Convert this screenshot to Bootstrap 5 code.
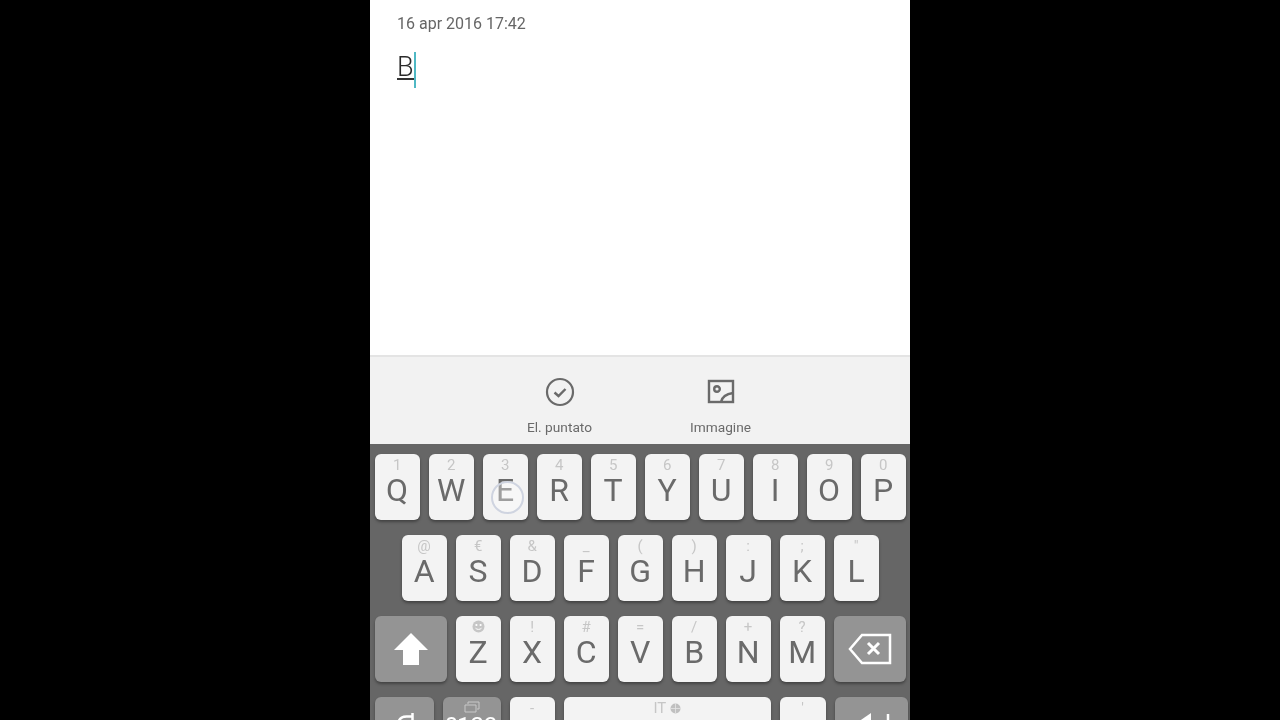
<!DOCTYPE html>
<html lang="it">
<head>
<meta charset="utf-8">
<title>Nota</title>
<link rel="stylesheet" href="https://cdn.jsdelivr.net/npm/bootstrap@5.3.0/dist/css/bootstrap.min.css">
<style>
html,body{height:720px;overflow:hidden;background:#000;}
body{font-family:Roboto,"Liberation Sans",sans-serif;}
.phone{width:540px;height:720px;background:#fff;overflow:hidden;filter:blur(.35px);}
.note{height:355px;padding:14px 27px 0;}
.stamp{font-size:16px;line-height:19px;color:#666;}
.typed{margin-top:19px;height:36px;font-size:27px;line-height:30px;color:#2a2a2a;font-weight:300;}
.typed span{display:inline-block;height:36px;border-right:2px solid #4fb8c4;position:relative;vertical-align:top;}
.typed span::after{content:"";position:absolute;left:0;right:0;top:26px;height:1.5px;background:#333;}
.tools{height:89px;background:#f2f2f2;border-top:2px solid #e4e4e4;color:#6a6a6a;}
.tool{width:161px;font-size:13.7px;line-height:16px;padding-top:20px;}
.tool svg{display:block;margin:0 auto 12px;}
.kbd{height:276px;background:#666;padding:10px 4px 0 4.6px;gap:15px;overflow:hidden;}
.krow{gap:9px;height:66px;flex:none;}
.krow.mid{padding-left:27px;}
.kk{width:45px;height:66px;flex:none;background:#f3f3f3;border-radius:6px;box-shadow:0 2px 3px rgba(0,0,0,.35);position:relative;color:#6a6a6a;text-align:center;font-size:32px;line-height:1;font-weight:400;padding-top:20px;}
.kk i{position:absolute;top:3px;left:0;right:0;font-style:normal;font-size:15px;line-height:16px;color:#c6c6c6;}
.kk.dark{background:#949494;color:#fff;padding-top:0;}
.wide{width:72px;}
.w59{width:59px;}
.w58{width:58px;}
.w207{width:207px;}
.w46{width:46px;}
.w73{width:73px;}
.ripple{position:absolute;left:8px;top:27px;width:33px;height:33px;border-radius:50%;border:2px solid #cfd4e0;background:rgba(255,255,255,.35);}
.kk.numkey{font-size:24px;padding-top:17px;color:#fff;}
.icotop{position:absolute;top:4px;left:0;right:0;margin:auto;display:block;}
.keyart{display:block;}
.mini{vertical-align:-1px;}
</style>
</head>
<body>
<div class="d-flex justify-content-center">
<div class="phone d-flex flex-column">
  <div class="note">
    <div class="stamp">16 apr 2016 17:42</div>
    <div class="typed"><span>B</span></div>
  </div>
  <div class="tools d-flex justify-content-center">
    <div class="tool text-center">
      <svg width="30" height="30" viewBox="0 0 30 30" fill="none" stroke="#6a6a6a" stroke-width="2.2"><circle cx="15" cy="15" r="13"/><path d="M9.5 15.5l4 3.5 7-7" stroke-width="2.4"/></svg>
      El. puntato
    </div>
    <div class="tool text-center">
      <svg width="30" height="30" viewBox="0 0 30 30" fill="none" stroke="#6a6a6a" stroke-width="2.4"><rect x="3" y="4" width="24" height="21"/><circle cx="11" cy="12" r="2.8"/><path d="M15 25c1-5 5-8 12-9"/></svg>
      Immagine
    </div>
  </div>
  <div class="kbd d-flex flex-column">
    <div class="krow d-flex">
      <div class="kk"><i>1</i>Q</div><div class="kk"><i>2</i>W</div>
      <div class="kk"><i>3</i>E<b class="ripple"></b></div>
      <div class="kk"><i>4</i>R</div><div class="kk"><i>5</i>T</div><div class="kk"><i>6</i>Y</div><div class="kk"><i>7</i>U</div><div class="kk"><i>8</i>I</div><div class="kk"><i>9</i>O</div><div class="kk"><i>0</i>P</div>
    </div>
    <div class="krow mid d-flex">
      <div class="kk"><i>@</i>A</div><div class="kk"><i>€</i>S</div><div class="kk"><i>&amp;</i>D</div><div class="kk"><i>_</i>F</div><div class="kk"><i>(</i>G</div><div class="kk"><i>)</i>H</div><div class="kk"><i>:</i>J</div><div class="kk"><i>;</i>K</div><div class="kk"><i>"</i>L</div>
    </div>
    <div class="krow d-flex">
      <div class="kk dark wide d-flex align-items-center justify-content-center">
        <svg width="36" height="34" viewBox="0 0 36 34" fill="#fff"><path d="M18 1L35 18H26V33H10V18H1Z"/></svg>
      </div>
      <div class="kk"><i><svg class="mini" width="13" height="13" viewBox="0 0 13 13"><circle cx="6.5" cy="6.5" r="6" fill="#c6c6c6"/><circle cx="4.4" cy="5" r="1.1" fill="#fff"/><circle cx="8.6" cy="5" r="1.1" fill="#fff"/><path d="M3.5 8.2c1.5 1.6 4.5 1.6 6 0" fill="none" stroke="#fff"/></svg></i>Z</div><div class="kk"><i>!</i>X</div><div class="kk"><i>#</i>C</div><div class="kk"><i>=</i>V</div><div class="kk"><i>/</i>B</div><div class="kk"><i>+</i>N</div><div class="kk"><i>?</i>M</div>
      <div class="kk dark wide d-flex align-items-center justify-content-center">
        <svg width="44" height="32" viewBox="0 0 44 32" fill="none" stroke="#fff" stroke-width="2.5"><path d="M14 2H42V30H14L2 16Z"/><path d="M20 10l11 11M31 10L20 21" stroke-width="3"/></svg>
      </div>
    </div>
    <div class="krow d-flex">
      <div class="kk dark w59"><svg class="keyart" width="59" height="66" viewBox="0 0 59 66" fill="none" stroke="#fff" stroke-width="2.5"><path d="M23.5 25c1-4 4-5.500 8-5.500h6M37.500 16v9"/></svg></div>
      <div class="kk dark w58 numkey"><svg class="icotop" width="16" height="12" viewBox="0 0 16 12" fill="none" stroke="#c8c8c8"><path d="M4 3V1h11v7h-2M1 4h11v7H1z"/></svg>?123</div>
      <div class="kk"><i>-</i></div>
      <div class="kk w207"><i>IT <svg class="mini" width="11" height="11" viewBox="0 0 11 11"><circle cx="5.5" cy="5.500" r="5" fill="#c0c0c0"/><path d="M0.500 5.500h10M5.500 0.500v10" stroke="#e6e6e6" stroke-width=".8"/></svg></i></div>
      <div class="kk w46"><i>'</i></div>
      <div class="kk dark w73"><svg class="keyart" width="73" height="66" viewBox="0 0 73 66" fill="#fff"><path d="M36 16V32L23 25Z"/><path d="M53 17V32" stroke="#fff" stroke-width="2.5"/></svg></div>
    </div>
  </div>
</div>
</div>
<script src="https://cdn.jsdelivr.net/npm/bootstrap@5.3.0/dist/js/bootstrap.bundle.min.js"></script>
</body>
</html>
